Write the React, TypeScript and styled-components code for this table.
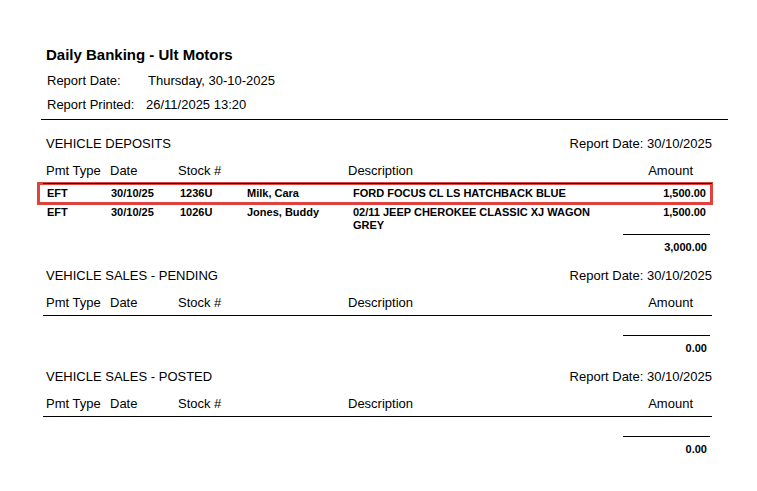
import React from "react";
import styled, { createGlobalStyle } from "styled-components";

const Global = createGlobalStyle`
  html, body { margin: 0; padding: 0; background: #fff; }
  body { font-family: "Liberation Sans", Arial, sans-serif; color: #000; }
`;

const Page = styled.div`
  width: 757px;
  height: 491px;
  padding: 46px 0 0 41px;
  box-sizing: border-box;
`;

const Header = styled.header`
  width: 687px;
  border-bottom: 1px solid #000;
  padding: 0 0 2px 5px;
  box-sizing: border-box;
`;

const Title = styled.h1`
  margin: 0 0 6px;
  font-size: 15px;
  font-weight: bold;
  line-height: 17px;
`;

const MetaRow = styled.div`
  display: flex;
  font-size: 13px;
  line-height: 24px;
`;

const MetaLabel = styled.span<{ $w: number }>`
  width: ${(p) => p.$w}px;
  padding-left: 1px;
`;

const Section = styled.section`
  width: 669px;
  margin-left: 2px;
  padding-top: 16px;

  & + & {
    padding-top: 14px;
  }
`;

const SectionHead = styled.div`
  display: flex;
  justify-content: space-between;
  font-size: 13px;
  line-height: 16px;
  padding: 0 0 0 3px;
`;

const ColHeads = styled.div`
  position: relative;
  z-index: 1;
  display: grid;
  grid-template-columns: 64px 68px 170px 1fr auto;
  font-size: 13px;
  line-height: 16px;
  padding: 11px 19px 4px 3px;
  border-bottom: 1px solid #000;
`;

const Rows = styled.div`
  display: flex;
  flex-direction: column;
`;

const Row = styled.div<{ $hl?: boolean }>`
  display: grid;
  grid-template-columns: 64px 69px 67px 106px 250px 1fr;
  font-size: 11px;
  font-weight: bold;
  line-height: 13px;
  padding: 5px 7px 5px 10px;
  margin: ${(p) => (p.$hl ? "-2px -1px -4px -6px" : "0 -1px 0 -6px")};
  outline: ${(p) => (p.$hl ? "3px solid #e0433f" : "none")};
  outline-offset: -3px;
`;

const Amount = styled.span`
  text-align: right;
`;

const TotalBlock = styled.div<{ $gap: number }>`
  display: flex;
  flex-direction: column;
  align-items: flex-end;
  margin-top: ${(p) => p.$gap}px;
  padding-right: 2px;
`;

const TotalRule = styled.div`
  width: 87px;
  border-top: 1px solid #000;
`;

const TotalValue = styled.div`
  font-size: 11px;
  font-weight: bold;
  line-height: 13px;
  padding: 6px 3px 0 0;
`;

type RowData = {
  type: string;
  date: string;
  stock: string;
  name: string;
  desc: string;
  amount: string;
};

const deposits: RowData[] = [
  { type: "EFT", date: "30/10/25", stock: "1236U", name: "Milk, Cara", desc: "FORD FOCUS CL LS HATCHBACK BLUE", amount: "1,500.00" },
  { type: "EFT", date: "30/10/25", stock: "1026U", name: "Jones, Buddy", desc: "02/11 JEEP CHEROKEE CLASSIC XJ WAGON GREY", amount: "1,500.00" },
];

function ReportSection({ title, rows, total }: { title: string; rows: RowData[]; total: string }) {
  return (
    <Section>
      <SectionHead>
        <span>{title}</span>
        <span>Report Date: 30/10/2025</span>
      </SectionHead>
      <ColHeads>
        <span>Pmt Type</span>
        <span>Date</span>
        <span>Stock #</span>
        <span>Description</span>
        <span>Amount</span>
      </ColHeads>
      {rows.length > 0 && (
        <Rows>
          {rows.map((r, i) => (
            <Row key={i} $hl={i === 0}>
              <span>{r.type}</span>
              <span>{r.date}</span>
              <span>{r.stock}</span>
              <span>{r.name}</span>
              <span>{r.desc}</span>
              <Amount>{r.amount}</Amount>
            </Row>
          ))}
        </Rows>
      )}
      <TotalBlock $gap={rows.length > 0 ? -3 : 19}>
        <TotalRule />
        <TotalValue>{total}</TotalValue>
      </TotalBlock>
    </Section>
  );
}

export default function App() {
  return (
    <>
      <Global />
      <Page>
        <Header>
          <Title>Daily Banking - Ult Motors</Title>
          <MetaRow>
            <MetaLabel $w={101}>Report Date:</MetaLabel>
            <span>Thursday, 30-10-2025</span>
          </MetaRow>
          <MetaRow>
            <MetaLabel $w={99}>Report Printed:</MetaLabel>
            <span>26/11/2025 13:20</span>
          </MetaRow>
        </Header>
        <ReportSection title="VEHICLE DEPOSITS" rows={deposits} total="3,000.00" />
        <ReportSection title="VEHICLE SALES - PENDING" rows={[]} total="0.00" />
        <ReportSection title="VEHICLE SALES - POSTED" rows={[]} total="0.00" />
      </Page>
    </>
  );
}
